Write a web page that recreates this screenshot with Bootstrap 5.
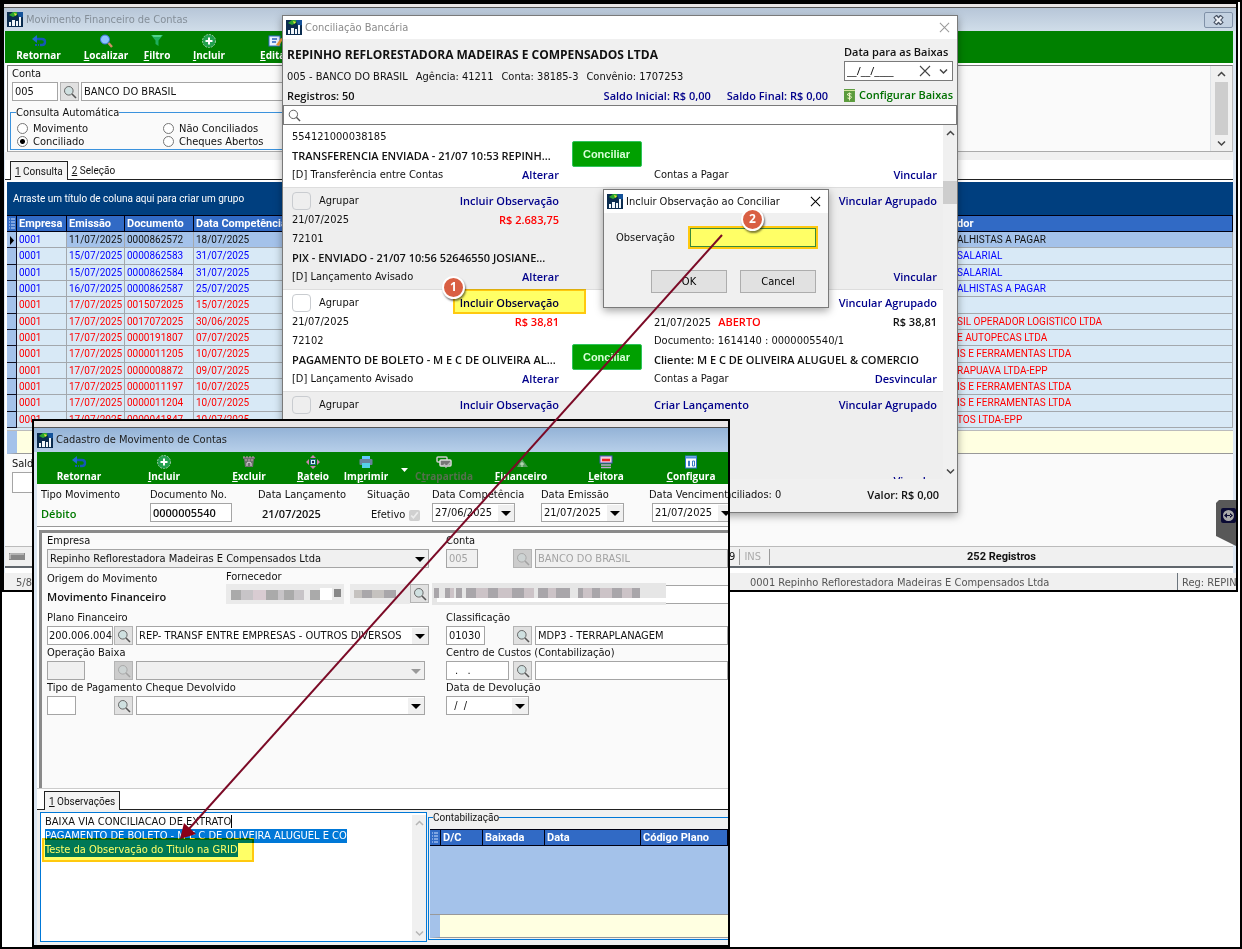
<!DOCTYPE html>
<html lang="pt-BR">
<head>
<meta charset="utf-8">
<meta name="viewport" content="width=device-width, initial-scale=1">
<title>Movimento Financeiro de Contas</title>
<link href="https://cdn.jsdelivr.net/npm/bootstrap@5.3.0/dist/css/bootstrap.min.css" rel="stylesheet">
<style>
  :root { --ui: "DejaVu Sans Condensed", "Open Sans", sans-serif; --strong: "Open Sans", "Noto Sans", sans-serif; --sys: Roboto, "Liberation Sans", sans-serif; }
  body { font: 11px/16px var(--ui); color: #111; background: #fff; }
  .desk { border: 2px solid #000; min-height: 100vh; overflow: hidden; }
  .shot { border: 2px solid #000; background: #dce7f3; overflow: hidden; }
  .shot-main { margin-right: 2px; }
  .shot-body { padding: 0 3px 0 1px; }
  .sys { font-family: var(--sys); font-size: 10px; }
  .fw-semi { font-family: var(--strong) !important; font-weight: 600 !important; }
  .heading { font: 700 12px/24px var(--strong); }
  .red { color: #f00; }
  .edge { height: 4px; background: #e9e6e6; border-bottom: 1px solid #555; }
  .titlebar { height: 23px; background: linear-gradient(#b7c6d8, #d0dde9); color: #858f99; padding: 0 3px; }
  .appicon { width: 16px; height: 15px; flex: none; margin-right: 3px; }
  .winclose { width: 29px; height: 16px; border: 1px solid #8091a8; border-radius: 2px; background: #c3d1e1; line-height: 1; }

  /* green command bars */
  .cmdbar { height: 32px; background: #008000; display: grid; overflow: hidden; }
  .cmdbar button { border: 0; background: none; color: #fff; font: 700 10px/14px var(--strong); padding: 3px 0 0; white-space: nowrap; display: flex; flex-direction: column; align-items: center; overflow: visible; }
  .cmdbar svg { width: 16px; height: 14px; display: block; }
  .cmdbar button:disabled { color: #55704d; }
  .bar-main { grid-template-columns: 67px 68px 34px 70px 62px; }
  .bar-cad { grid-template-columns: 84px 86px 84px 44px 62px 13px 68px 86px 84px 86px; }

  /* fields */
  .fld { height: 19px; border: 1px solid #a5a5a5; border-radius: 0; background-color: #fff; font: 11px/16px var(--ui); color: #111; padding: 0 2px; min-width: 0; }
  .fld:disabled { background-color: #f0f0f0; color: #a3a3a3; opacity: 1; }
  select.fld { appearance: none; background-repeat: no-repeat; background-position: right center; background-image: url("data:image/svg+xml,%3Csvg xmlns='http://www.w3.org/2000/svg' width='16' height='16'%3E%3Crect width='16' height='16' fill='%23f0f0f0'/%3E%3Cpath d='M3 6h10l-5 5z' fill='%23000'/%3E%3C/svg%3E"); }
  .fld.grey { background-color: #f0f0f0; }
  select.fld:disabled { background-image: url("data:image/svg+xml,%3Csvg xmlns='http://www.w3.org/2000/svg' width='16' height='16'%3E%3Cpath d='M3 6h10l-5 5z' fill='%23999'/%3E%3C/svg%3E"); }
  .lupa { width: 19px; height: 19px; flex: none; border: 1px solid #b4b4b4; background: #e1e1e1; padding: 0; display: flex; align-items: center; justify-content: center; }
  .lupa svg { width: 14px; height: 14px; }
  .lupa:disabled { background: #ccc; }
  .lupa:disabled svg { opacity: .35; }

  .filterbox { height: 87px; margin-left: 2px; margin-top: 2px; background: #fafafa; border: 1px solid #777; border-right-color: #bbb; border-bottom-color: #aaa; }
  .contarow { display: grid; grid-template-columns: 46px 19px 1fr; column-gap: 2px; width: 60%; }
  .autobox { border: 1px solid #3a92dd; height: 38px; width: 60%; margin: 11px 0 0 2px; padding: 9px 0 0 6px; position: relative; }
  .autobox legend { position: absolute; top: -8px; left: 5px; width: auto; background: #fafafa; font: 11px/16px var(--ui); margin: 0; }
  .autobox label { display: flex; align-items: center; width: 146px; height: 13px; gap: 5px; white-space: nowrap; }
  .autobox input { appearance: none; width: 11px; height: 11px; margin: 0; border: 1px solid #777; border-radius: 50%; background: #fff; }
  .autobox input:checked { background: radial-gradient(#000 0 2px, #fff 3px); }
  .sbar { background: #f0f0f0; display: flex; flex-direction: column; align-items: center; justify-content: space-between; color: #444; }
  .sbar svg { width: 9px; height: 16px; }

  .tabstrip { background: #fff; height: 20px; border-bottom: 1px solid #222; padding-left: 5px; align-items: flex-end; }
  .tabstrip button { border: 0; background: none; font: 10px/15px var(--sys); padding: 0 4px; height: 18px; color: #111; }
  .tabstrip .on { border: 1px solid #222; border-bottom: 0; background: #f3f3f3; margin-bottom: -1px; height: 19px; }
  .groupband { background: #003f7f; color: #fff; height: 33px; line-height: 33px; padding-left: 6px; }
  .dbgrid { width: 100%; table-layout: fixed; border-collapse: separate; border-spacing: 0; font: 10px/13px var(--sys); }
  .dbgrid th { background: #316ac5; color: #fff; font-size: 11px; height: 17px; line-height: 14px; padding: 0 2px; border: solid #001; border-width: 1px 1px 1px 0; white-space: nowrap; overflow: hidden; }
  .dbgrid td { background: #d8e9f6; border: solid #a3a8ad; border-width: 0 1px 1px 0; padding: 0 2px; white-space: nowrap; overflow: hidden; color: #f00; }
  .dbgrid td:first-child { background: #a4c2ea; border-color: #112; color: #000; padding: 0; line-height: 1; }
  .dbgrid tr.blue td { color: #00f; }
  .dbgrid tr.cur td { background: #a4c2ea; color: #111; }
  .dbgrid tr.cur td:nth-child(2) { background: #d8e9f6; color: #00f; }
  .dbgrid tbody tr { height: 16px; }
  .movs { height: 213px; }
  .movs th:last-child, .movs td:last-child { padding-left: 0; }
  .dbgrid th.skip, .dbgrid td.skip { border-right: 0; }
  .sumrow { height: 23px; background: #ffffe1; border-left: 10px solid #a4c2ea; border-bottom: 1px solid #999; }
  .statusrow { height: 22px; background: #f0f0f0; border-top: 1px solid #bbb; border-bottom: 2px solid #60666c; }
  .statusrow > div { border-left: 1px solid #999; }
  .appstatus { height: 17px; line-height: 20px; background: #f0f0f0; color: #555; overflow: hidden; }

  /* floating windows */
  .win { position: absolute; border: 1px solid #7a7a7a; background: #f0f0f0; box-shadow: 0 3px 8px rgba(0,0,0,.35); }
  .win-title { background: #fff; height: 23px; padding: 0 3px; }
  .win-title button { border: 0; background: none; padding: 0; line-height: 0; }
  .w-conc { left: 280px; top: 13px; width: 676px; height: 498px; }
  .w-obs { left: 601px; top: 187px; width: 226px; height: 119px; }
  .w-cad { position: absolute; left: 30px; top: 417px; width: 698px; }
  .navy { color: #00008b; }
  .win a { text-decoration: none; font-family: var(--strong); font-weight: 600; color: #00008b; }
  .win a.green { color: #007000; height: 20px; margin-top: 4px; }
  .extrato { height: 354px; overflow: hidden; background: #eee; }
  .lanc { display: grid; grid-template-columns: 267fr 95fr 283fr; padding: 3px 6px 3px 9px; border-bottom: 1px solid #ddd; line-height: 19px; white-space: nowrap; }
  .lanc:nth-child(odd) { background: #fff; }
  .lanc.first { padding-top: 2px; }
  .lanc .ln { display: flex; justify-content: space-between; height: 19px; }
  .lanc input { appearance: none; width: 19px; height: 18px; border: 1px solid #c9ccd0; border-radius: 4px; margin: 0 8px 0 0; }
  .btn-conc { width: 70px; height: 26px; border: 1px solid #2fc35c; border-radius: 2px; background: #00a000; color: #d8ffd8; font: 700 11px/20px "Liberation Sans", sans-serif; padding: 0; }
  .dlg-btn { width: 76px; height: 23px; background: #e1e1e1; border: 1px solid #adadad; font: 11px/18px var(--ui); padding: 0; }

  .field-head { display: grid; grid-template-columns: 109px 108px 109px 65px 109px 108px 100px; height: 43px; padding: 3px 0 0 4px; background: #fafafa; border-bottom: 1px solid #999; white-space: nowrap; }
  .field-head label, .cap { display: block; height: 16px; line-height: 16px; white-space: nowrap; }
  .field-head b { line-height: 22px; }
  .formbox { height: 258px; margin: 3px 0 0 2px; border: solid #8a8a8a; border-width: 3px 0 0 3px; background: #fafafa; padding-left: 5px; overflow: hidden; }
  .frow { display: grid; grid-template-columns: 382px 1fr; column-gap: 17px; height: 35px; }
  .trio { display: grid; grid-template-columns: 67px 19px 1fr; }
  .trio > :last-child { margin-left: 3px; }
  .trio .code { padding: 0 0 0 1px; width: 66px; }
  .memo { width: 387px; height: 130px; border: 1px solid #0078d7; background: #fff; line-height: 14px; padding: 2px 0 0 4px; white-space: nowrap; outline: 0; }
  .memo .sel { background: #0078d7; color: #fff; display: inline-block; height: 14px; }
  .contab { border: 1px solid #0078d7; border-right: 0; margin: 5px 0 2px 1px; position: relative; }
  .contab legend { position: absolute; top: -8px; left: 4px; width: auto; background: #f0f0f0; font: 10px/16px var(--sys); margin: 0; }

  /* annotations drawn over the windows */
  .note { position: absolute; background: #ffff66; border: 2px solid #ffc90e; mix-blend-mode: multiply; pointer-events: none; }
  .pin { position: absolute; width: 23px; height: 23px; border: 2px solid #fff; border-radius: 50%; background: #d95f43; color: #fff; font: 700 12px/18px var(--strong); text-align: center; box-shadow: 1px 2px 2px rgba(0,0,0,.5); }
  .arrow { position: absolute; left: -2px; top: -2px; pointer-events: none; }
  .tview { position: absolute; right: 4px; top: 498px; width: 20px; height: 46px; }
</style>
</head>
<body>
<svg width="0" height="0" class="position-absolute" aria-hidden="true">
  <symbol id="app" viewBox="0 0 16 15"><rect width="16" height="15" fill="#0b2c4f"/><path d="M2 3l4-3h5l-1 3-4 2z" fill="#2ba52e"/><path d="M7 1l3 1-2 2z" fill="#e9e13a"/><path d="M10 0h6v5l-4 1z" fill="#15539a"/><path d="M2 10h2v4H2zM5 8h3v6H5zM9 9h2v5H9zM12 5h2v9h-2z" fill="#f1f6fa"/></symbol>
  <symbol id="lupa" viewBox="0 0 14 14"><circle cx="5.8" cy="5.8" r="4.3" fill="#cfe0e0" stroke="#666"/><path d="M9 9l4 4" stroke="#555" stroke-width="1.6"/></symbol>
  <symbol id="back" viewBox="0 0 16 14"><path d="M3 5h8q3 0 3 3t-3 3H9" fill="none" stroke="#1457b5" stroke-width="2.4"/><path d="M6 1L1 5l5 4z" fill="#1f6cd0"/><path d="M4 11h2M7 11h1" stroke="#1457b5" stroke-width="2"/></symbol>
  <symbol id="find" viewBox="0 0 16 14"><circle cx="7" cy="5.5" r="4.5" fill="#8cc3ff" stroke="#3f70dd"/><path d="M10.5 9l3.5 4" stroke="#d08f66" stroke-width="2.4"/></symbol>
  <symbol id="funnel" viewBox="0 0 16 14"><path d="M2 1h12L9.500 6.500V12l-3-2V6.500z" fill="#1fae5d"/><path d="M3 1h10l-1.500 2h-7z" fill="#53d58b"/></symbol>
  <symbol id="plus" viewBox="0 0 16 14"><circle cx="8" cy="7" r="6.5" fill="#22a04e" stroke="#9ac9a4" stroke-dasharray="2 1"/><path d="M8 3.500v7M4.500 7h7" stroke="#fff" stroke-width="2"/></symbol>
  <symbol id="edit" viewBox="0 0 16 14"><rect x="2" y="2" width="11" height="10" fill="#eaf2ff" stroke="#316ac5"/><path d="M5 5h5M5 8h4" stroke="#2b62bd" stroke-width="1.5"/><path d="M9 11l5-7 2 1-4 7z" fill="#f59a37"/></symbol>
  <symbol id="trash" viewBox="0 0 16 14"><path d="M2 2h12v2H2zM3 4h10l-1 8H4z" fill="#6f6f6f"/><path d="M2 2h12M4 5l8 0" stroke="#c9a9b4" stroke-dasharray="2 1"/><path d="M6 11V8q2-2 4 0v3" fill="none" stroke="#ddd"/></symbol>
  <symbol id="rateio" viewBox="0 0 16 14"><path d="M8 0l3 3H5zM8 14l3-3H5zM1 7l3-3v6zM15 7l-3-3v6z" fill="#c985ae"/><rect x="5.5" y="4.5" width="5" height="5" fill="#dff" stroke="#268"/><circle cx="8" cy="7" r="1.2" fill="#124"/></symbol>
  <symbol id="print" viewBox="0 0 16 14"><path d="M4 1h8v4H4z" fill="#62c8ff"/><rect x="1.5" y="4" width="13" height="6" rx="1" fill="#68829d"/><path d="M4 8h8v5H4z" fill="#55d0e8"/></symbol>
  <symbol id="cards" viewBox="0 0 16 14"><rect x="1" y="2" width="10" height="5" rx="1" fill="none" stroke="#ccc" stroke-width="1.5"/><rect x="4" y="5" width="11" height="6" rx="1" fill="#777" stroke="#ddd" stroke-width="1.5"/><path d="M8 9l2 3 5-5" fill="none" stroke="#bbb" stroke-width="1.5"/></symbol>
  <symbol id="fin" viewBox="0 0 16 14"><path d="M9 4l6 8H4z" fill="#5a9d62"/><path d="M9 7v5M7 9h4" stroke="#cde8c9"/></symbol>
  <symbol id="leitor" viewBox="0 0 16 14"><rect x="2" y="1" width="12" height="7" fill="#eecddb" stroke="#4c55c8"/><path d="M4 5h8" stroke="#e22" stroke-width="2.5"/><path d="M3 10h10M3 12.500h10" stroke="#bda8ce" stroke-width="1.5"/></symbol>
  <symbol id="config" viewBox="0 0 16 14"><rect x="2.5" y="1" width="11" height="12" fill="#fff" stroke="#2f74c8"/><path d="M2.500 2.500h11" stroke="#4e91df" stroke-width="2"/><path d="M5.500 6h1v5h-1zM9.500 6h2v5h-2z" fill="none" stroke="#3a78c4"/></symbol>
  <symbol id="up" viewBox="0 0 9 16"><path d="M1 10L4.500 6.500 8 10" fill="none" stroke="currentColor" stroke-width="1.5"/></symbol>
  <symbol id="down" viewBox="0 0 9 16"><path d="M1 6.500L4.500 10 8 6.500" fill="none" stroke="currentColor" stroke-width="1.5"/></symbol>
  <symbol id="x" viewBox="0 0 12 12"><path d="M1 1l10 10M11 1L1 11" stroke="currentColor" stroke-width="1.1"/></symbol>
</svg>

<div class="desk position-relative">

  <!-- main window -->
  <main class="shot shot-main">
    <div class="edge"></div>
    <div class="titlebar d-flex align-items-center">
      <svg class="appicon"><use href="#app"/></svg><span>Movimento Financeiro de Contas</span>
      <button class="winclose ms-auto p-0" aria-label="Fechar"><svg width="11" height="10" viewBox="0 0 11 10"><path d="M2 1l7 8M9 1L2 9" stroke="#454f60" stroke-width="4.5"/><path d="M2.500 2l6 6M8.500 2l-6 6" stroke="#eef2f8" stroke-width="2.2"/></svg></button>
    </div>
    <div class="shot-body">
      <nav class="cmdbar bar-main">
        <button><svg><use href="#back"/></svg>Retornar</button>
        <button><svg><use href="#find"/></svg><span><u>L</u>ocalizar</span></button>
        <button><svg><use href="#funnel"/></svg><span><u>F</u>iltro</span></button>
        <button><svg><use href="#plus"/></svg><span><u>I</u>ncluir</span></button>
        <button><svg><use href="#edit"/></svg><span><u>E</u>ditar</span></button>
      </nav>
      <div class="bg-white overflow-hidden">
        <section class="filterbox d-flex">
          <div class="flex-grow-1">
            <label class="d-block ms-1" for="conta">Conta</label>
            <div class="contarow ms-1">
              <input class="fld" id="conta" value="005">
              <button class="lupa" aria-label="Pesquisar conta"><svg><use href="#lupa"/></svg></button>
              <input class="fld" value="BANCO DO BRASIL" aria-label="Nome da conta">
            </div>
            <fieldset class="autobox">
              <legend>Consulta Automática</legend>
              <div class="d-flex"><label><input type="radio" name="ca">Movimento</label><label><input type="radio" name="ca">Não Conciliados</label></div>
              <div class="d-flex"><label><input type="radio" name="ca" checked>Conciliado</label><label><input type="radio" name="ca">Cheques Abertos</label></div>
            </fieldset>
          </div>
          <div class="sbar border-start px-1" aria-hidden="true"><svg><use href="#up"/></svg><span class="flex-grow-1" style="width:13px;background:#cdcdcd"></span><svg><use href="#down"/></svg></div>
        </section>
        <div style="height:8px;background:#f0f0f0"></div>
        <div class="tabstrip d-flex"><button class="on"><u>1</u> Consulta</button><button><u>2</u> Seleção</button></div>
        <div style="margin:2px 0 0 2px">
          <div class="groupband sys">Arraste um título de coluna aqui para criar um grupo</div>
          <table class="dbgrid movs">
            <colgroup><col style="width:10px"><col style="width:50px"><col style="width:58px"><col style="width:69px"><col><col style="width:276px"></colgroup>
            <thead><tr><th class="p-0"><svg class="d-block" width="9" height="11" viewBox="0 0 9 11"><path d="M2 1h1M2 4h1M2 7h1M2 10h1M4 1h4M4 4h4M4 7h4M4 10h4" stroke="#cfe0ff"/></svg></th><th>Empresa</th><th>Emissão</th><th>Documento</th><th class="skip">Data Competência</th><th>dor</th></tr></thead>
            <tbody>
              <tr class="cur"><td><svg width="8" height="9" viewBox="0 0 8 9"><path d="M3 0l4 4.500L3 9z"/></svg></td><td>0001</td><td>11/07/2025</td><td>0000862572</td><td class="skip">18/07/2025</td><td>ALHISTAS A PAGAR</td></tr>
              <tr class="blue"><td></td><td>0001</td><td>15/07/2025</td><td>0000862583</td><td class="skip">31/07/2025</td><td>SALARIAL</td></tr>
              <tr class="blue"><td></td><td>0001</td><td>15/07/2025</td><td>0000862584</td><td class="skip">31/07/2025</td><td>SALARIAL</td></tr>
              <tr class="blue"><td></td><td>0001</td><td>16/07/2025</td><td>0000862587</td><td class="skip">25/07/2025</td><td>ALHISTAS A PAGAR</td></tr>
              <tr><td></td><td>0001</td><td>17/07/2025</td><td>0015072025</td><td class="skip">15/07/2025</td><td></td></tr>
              <tr><td></td><td>0001</td><td>17/07/2025</td><td>0017072025</td><td class="skip">30/06/2025</td><td>SIL OPERADOR LOGISTICO LTDA</td></tr>
              <tr><td></td><td>0001</td><td>17/07/2025</td><td>0000191807</td><td class="skip">07/07/2025</td><td>E AUTOPECAS LTDA</td></tr>
              <tr><td></td><td>0001</td><td>17/07/2025</td><td>0000011205</td><td class="skip">10/07/2025</td><td>IS E FERRAMENTAS LTDA</td></tr>
              <tr><td></td><td>0001</td><td>17/07/2025</td><td>0000008872</td><td class="skip">09/07/2025</td><td>RAPUAVA LTDA-EPP</td></tr>
              <tr><td></td><td>0001</td><td>17/07/2025</td><td>0000011197</td><td class="skip">10/07/2025</td><td>IS E FERRAMENTAS LTDA</td></tr>
              <tr><td></td><td>0001</td><td>17/07/2025</td><td>0000011204</td><td class="skip">10/07/2025</td><td>IS E FERRAMENTAS LTDA</td></tr>
              <tr><td></td><td>0001</td><td>17/07/2025</td><td>0000041847</td><td class="skip">10/07/2025</td><td>TOS LTDA-EPP</td></tr>
            </tbody>
          </table>
          <div style="height:3px;background:#d8e9f6;border-bottom:1px solid #bbb"></div>
          <div class="sumrow"></div>
        </div>
        <section style="background:#fafafa;height:92px;padding:2px 0 0 7px">
          <label class="d-block" for="saldo">Saldo</label>
          <input class="fld" id="saldo" style="width:90px;height:21px">
        </section>
        <div class="statusrow d-flex align-items-center">
          <svg class="ms-1" width="16" height="8"><rect width="16" height="7" fill="#888"/><path d="M1 6V1h14" stroke="#ddd" fill="none"/></svg>
          <div class="ms-auto border-0 pe-1">5.9</div><div class="px-1 me-1" style="color:#aaa">INS</div>
          <div class="text-center fw-bold" style="width:464px;font-family:var(--sys)">252 Registros</div>
        </div>
        <div style="height:5px;background:#fff"></div>
      </div>
    </div>
    <footer class="appstatus d-flex"><span class="ps-2 ms-1">5/8</span><span class="ms-auto" style="width:427px">0001 Repinho Reflorestadora Madeiras E Compensados Ltda</span><span class="ps-1 border-start border-secondary text-nowrap overflow-hidden" style="width:59px">Reg: REPINHO</span></footer>
  </main>
  <svg class="tview" viewBox="0 0 20 46" aria-hidden="true"><path d="M3 0h17v46L0 36V3z" fill="#585858"/><rect x="5" y="8" width="15" height="15" rx="2" fill="#0b0b34"/><circle cx="12.5" cy="15.5" r="5.5" fill="#aaa"/><path d="M8 15.500l3-2.500v5zM17 15.500L14 13v5zM10 15h5v1h-5z" fill="#0b0b34"/></svg>

  <!-- bank reconciliation -->
  <section class="win w-conc">
    <div class="win-title d-flex align-items-center" style="color:#8a8a8a"><svg class="appicon"><use href="#app"/></svg>Conciliação Bancária
      <button class="ms-auto me-1" aria-label="Fechar" style="color:#999"><svg width="11" height="11"><use href="#x"/></svg></button></div>
    <div class="d-flex" style="height:66px;padding:4px 4px 0 4px">
      <div class="flex-grow-1">
        <div class="heading">REPINHO REFLORESTADORA MADEIRAS E COMPENSADOS LTDA</div>
        <div style="line-height:20px"><span class="me-2">005 - BANCO DO BRASIL</span><span class="me-2">Agência: 41211</span><span class="me-2">Conta: 38185-3</span>Convênio: 1707253</div>
        <div class="d-flex fw-semi" style="line-height:18px"><span>Registros: 50</span><span class="navy ms-auto me-3">Saldo Inicial: R$ 0,00</span><span class="navy me-3">Saldo Final: R$ 0,00</span></div>
      </div>
      <div style="width:109px">
        <label class="fw-semi d-block text-nowrap" for="dtb" style="line-height:18px">Data para as Baixas</label>
        <div class="d-flex align-items-center bg-white pe-1" style="border:1px solid #7a7a7a;height:20px;color:#444">
          <input id="dtb" class="border-0 p-0 w-50" value="__/__/____" style="font:11px/16px var(--strong);margin-left:2px">
          <svg class="ms-auto me-2" width="12" height="12"><use href="#x"/></svg><svg width="9" height="16"><use href="#down"/></svg>
        </div>
        <a href="#" class="green d-flex align-items-center text-nowrap"><svg class="me-1" width="11" height="13" viewBox="0 0 11 13"><rect width="11" height="13" fill="#5b9b3c"/><path d="M0 1.500h11" stroke="#d7e8a0"/><path d="M7.500 5Q3 3.500 3.500 6q4 .5 4 2.500-1 2-4 .5M5.500 3.500v8" stroke="#eff5c8" fill="none"/></svg>Configurar Baixas</a>
      </div>
    </div>
    <div class="d-flex align-items-center bg-white" style="height:20px;border:1px solid #7a7a7a"><svg class="mx-1" width="13" height="13" viewBox="0 0 14 14"><circle cx="5.8" cy="5.8" r="4.5" fill="none" stroke="#555"/><path d="M9 9l4 4" stroke="#555" stroke-width="1.5"/></svg><input class="border-0 p-0 flex-grow-1" aria-label="Pesquisar" style="height:16px"></div>
    <div class="d-flex">
      <div class="extrato flex-grow-1">
        <article class="lanc first">
          <div><div class="ln">554121000038185</div><div class="ln fw-semi">TRANSFERENCIA ENVIADA - 21/07 10:53 REPINH...</div><div class="ln"><span>[D] Transferência entre Contas</span><a href="#">Alterar</a></div></div>
          <div class="text-center"><button class="btn-conc" style="margin-top:14px">Conciliar</button></div>
          <div><div class="ln"></div><div class="ln"></div><div class="ln"><span>Contas a Pagar</span><a href="#">Vincular</a></div></div>
        </article>
        <article class="lanc">
          <div><div class="ln"><label class="d-flex align-items-center"><input type="checkbox">Agrupar</label><a href="#">Incluir Observação</a></div><div class="ln"><span>21/07/2025</span><b class="fw-semi red">R$ 2.683,75</b></div><div class="ln">72101</div><div class="ln fw-semi">PIX - ENVIADO - 21/07 10:56 52646550 JOSIANE...</div><div class="ln"><span>[D] Lançamento Avisado</span><a href="#">Alterar</a></div></div>
          <div></div>
          <div><div class="ln"><span></span><a href="#">Vincular Agrupado</a></div><div class="ln"></div><div class="ln"></div><div class="ln"></div><div class="ln"><span></span><a href="#">Vincular</a></div></div>
        </article>
        <article class="lanc">
          <div><div class="ln"><label class="d-flex align-items-center"><input type="checkbox">Agrupar</label><a href="#">Incluir Observação</a></div><div class="ln"><span>21/07/2025</span><b class="fw-semi red">R$ 38,81</b></div><div class="ln">72102</div><div class="ln fw-semi">PAGAMENTO DE BOLETO - M E C DE OLIVEIRA AL...</div><div class="ln"><span>[D] Lançamento Avisado</span><a href="#">Alterar</a></div></div>
          <div class="text-center"><button class="btn-conc" style="margin-top:51px">Conciliar</button></div>
          <div><div class="ln"><span></span><a href="#">Vincular Agrupado</a></div><div class="ln"><span>21/07/2025 <b class="fw-semi red ms-1">ABERTO</b></span><b class="fw-semi">R$ 38,81</b></div><div class="ln">Documento: 1614140 : 0000005540/1</div><div class="ln fw-semi">Cliente: M E C DE OLIVEIRA ALUGUEL &amp; COMERCIO</div><div class="ln"><span>Contas a Pagar</span><a href="#">Desvincular</a></div></div>
        </article>
        <article class="lanc">
          <div><div class="ln"><label class="d-flex align-items-center"><input type="checkbox">Agrupar</label><a href="#">Incluir Observação</a></div><div class="ln fw-semi"><span>21/07/2025</span><b class="fw-semi red">R$ 53,25</b></div></div>
          <div></div>
          <div><div class="ln"><a href="#">Criar Lançamento</a><a href="#">Vincular Agrupado</a></div><div class="ln">Não Localizado</div><div class="ln"></div><div class="ln"></div><div class="ln"><span></span><a href="#">Vincular</a></div></div>
        </article>
      </div>
      <div class="sbar flex-shrink-0" style="width:14px"><svg><use href="#up"/></svg><span style="width:14px;height:23px;background:#cdcdcd;margin-bottom:220px"></span><svg><use href="#down"/></svg></div>
    </div>
    <div class="d-flex justify-content-end" style="line-height:32px;padding-right:18px"><span style="margin-right:86px">Não Conciliados: 0</span><span class="fw-semi">Valor: R$ 0,00</span></div>
  </section>

  <!-- transaction record -->
  <section class="shot w-cad">
    <div class="edge" style="height:7px"></div>
    <div class="titlebar d-flex align-items-center" style="height:24px;background:linear-gradient(#94b3d7,#b7cfe9);color:#222"><svg class="appicon"><use href="#app"/></svg>Cadastro de Movimento de Contas</div>
    <div style="margin-left:3px">
      <nav class="cmdbar bar-cad">
        <button><svg><use href="#back"/></svg>Retornar</button>
        <button><svg><use href="#plus"/></svg><span><u>I</u>ncluir</span></button>
        <button><svg><use href="#trash"/></svg><span><u>E</u>xcluir</span></button>
        <button><svg><use href="#rateio"/></svg><span><u>R</u>ateio</span></button>
        <button><svg><use href="#print"/></svg><span>Im<u>p</u>rimir</span></button>
        <button aria-label="Opções de impressão"><svg viewBox="0 0 16 14" class="mt-2"><path d="M5 5h7l-3.500 4z" fill="#fff"/></svg></button>
        <button disabled><svg><use href="#cards"/></svg><span>C<u>t</u>rapartida</span></button>
        <button><svg><use href="#fin"/></svg><span><u>F</u>inanceiro</span></button>
        <button><svg><use href="#leitor"/></svg><span><u>L</u>eitora</span></button>
        <button><svg><use href="#config"/></svg><span><u>C</u>onfigura</span></button>
      </nav>
      <div class="field-head">
        <div><span class="cap">Tipo Movimento</span><b class="fw-semi" style="color:#007a00">Débito</b></div>
        <div><label for="doc">Documento No.</label><input id="doc" class="fld fw-semi" value="0000005540" style="width:82px"></div>
        <div><span class="cap">Data Lançamento</span><b class="fw-semi ms-1">21/07/2025</b></div>
        <div><span class="cap">Situação</span><label class="d-flex align-items-center ms-1 mt-1">Efetivo<input type="checkbox" checked disabled class="m-0 ms-1" style="width:11px;height:11px"></label></div>
        <div><label for="dc">Data Competência</label><select id="dc" class="fld" style="width:83px"><option>27/06/2025</option></select></div>
        <div><label for="de">Data Emissão</label><select id="de" class="fld" style="width:83px"><option>21/07/2025</option></select></div>
        <div><label for="dv">Data Vencimento</label><select id="dv" class="fld" style="width:83px;margin-left:3px"><option>21/07/2025</option></select></div>
      </div>
      <div class="bg-white overflow-hidden">
      <div class="formbox">
        <div class="frow">
          <div><label class="cap" for="emp">Empresa</label><select id="emp" class="fld grey w-100"><option>Repinho Reflorestadora Madeiras E Compensados Ltda</option></select></div>
          <div><label class="cap" for="cta">Conta</label><div class="trio"><input id="cta" class="fld" value="005" disabled style="width:32px"><button class="lupa" disabled aria-label="Pesquisar"><svg><use href="#lupa"/></svg></button><input class="fld" value="BANCO DO BRASIL" disabled aria-label="Nome da conta"></div></div>
        </div>
        <div class="frow" style="margin:3px 0 4px">
          <div class="d-flex">
            <div style="width:181px"><span class="cap">Origem do Movimento</span><b class="fw-semi text-nowrap" style="line-height:20px">Movimento Financeiro</b></div>
            <div class="flex-grow-1"><span class="cap" style="height:13px;line-height:12px;overflow:hidden">Fornecedor</span>
              <div class="d-flex"><svg class="me-auto" width="184" height="20" aria-hidden="true"><path d="M0 0h118v20H0zM124 0h60v20h-60z" fill="#eaeaea"/><path d="M5 6h10v10H5zM40 6h12v10H40zM58 6h10v10H58zM84 6h10v10H84z" fill="#aaa"/><path d="M15 6h12v10H15zM52 6h6v10h-6zM68 6h10v10H68z" fill="#c7c4c7"/><path d="M27 6h13v10H27z" fill="#d9ccd2"/><path d="M108 5h7v8h-7z" fill="#888"/><path d="M94 4h12v12H94z" fill="#fff"/><path d="M128 6h8v8h-8zM146 6h12v8h-12z" fill="#c5c2bf"/><path d="M136 6h10v8h-10zM158 6h12v8h-12z" fill="#a9a7aa"/></svg><button class="lupa" aria-label="Pesquisar fornecedor"><svg><use href="#lupa"/></svg></button></div>
            </div>
          </div>
          <div style="margin:12px 0 0 -14px;height:22px"><svg class="d-block" width="300" height="22" aria-hidden="true"><path d="M0 2.500h300v18H0z" fill="#fff" stroke="#a5a5a5"/><path d="M0 0h234v22H0z" fill="#e6e6e6"/><path d="M5 15h229v4H5z" fill="#fff"/><path d="M2 5h5v10H2zM13 5h5v10h-5zM24 5h6v10h-6zM34 5h10v10H34zM56 5h10v10H56zM80 5h12v10H80zM106 5h10v10h-10zM124 5h14v10h-14zM146 5h5v10h-5zM160 5h8v10h-8zM180 5h10v10h-10zM200 5h8v10h-8z" fill="#a9a6aa"/><path d="M18 5h4v10h-4zM44 5h12v10H44zM66 5h14v10H66zM92 5h10v10H92zM116 5h8v10h-8zM151 5h9v10h-9zM168 5h12v10h-12zM190 5h10v10h-10z" fill="#ccc3c7"/></svg></div>
        </div>
        <div class="frow">
          <div><label class="cap" for="pf">Plano Financeiro</label><div class="trio"><input id="pf" class="fld code" value="200.006.004"><button class="lupa" aria-label="Pesquisar"><svg><use href="#lupa"/></svg></button><select class="fld" aria-label="Plano"><option>REP- TRANSF ENTRE EMPRESAS - OUTROS DIVERSOS</option></select></div></div>
          <div><label class="cap" for="cl">Classificação</label><div class="trio"><input id="cl" class="fld" value="01030" style="width:39px"><button class="lupa" aria-label="Pesquisar"><svg><use href="#lupa"/></svg></button><input class="fld" value="MDP3 - TERRAPLANAGEM" aria-label="Nome da classificação"></div></div>
        </div>
        <div class="frow">
          <div><label class="cap" for="ob">Operação Baixa</label><div class="trio pe-1"><input id="ob" class="fld" disabled style="width:38px"><button class="lupa" disabled aria-label="Pesquisar"><svg><use href="#lupa"/></svg></button><select class="fld" disabled aria-label="Operação"></select></div></div>
          <div><label class="cap" for="cc">Centro de Custos (Contabilização)</label><div class="trio"><input id="cc" class="fld ps-2" value=".   ." style="width:63px"><button class="lupa" aria-label="Pesquisar"><svg><use href="#lupa"/></svg></button><input class="fld" aria-label="Nome do centro de custos"></div></div>
        </div>
        <div class="frow">
          <div><label class="cap" for="tp">Tipo de Pagamento Cheque Devolvido</label><div class="trio pe-1"><input id="tp" class="fld" style="width:29px"><button class="lupa" aria-label="Pesquisar"><svg><use href="#lupa"/></svg></button><select class="fld" aria-label="Tipo de pagamento"></select></div></div>
          <div><label class="cap" for="dd">Data de Devolução</label><select id="dd" class="fld ps-1" style="width:83px"><option>&nbsp;/ &nbsp;/</option></select></div>
        </div>
      </div>
      <div class="tabstrip d-flex" style="height:22px;border-top:1px solid #ccc;padding-left:7px"><button class="on"><u>1</u> Observações</button></div>
      <div class="d-flex" style="background:#f0f0f0;padding:2px 0 3px 3px">
        <div class="memo flex-shrink-0 d-flex" role="textbox" aria-multiline="true" aria-label="Observações" contenteditable="true" tabindex="0"><div class="flex-grow-1"><span style="border-right:1px solid #000">BAIXA VIA CONCILIACAO DE EXTRATO</span><br><span class="sel">PAGAMENTO DE BOLETO - M E C DE OLIVEIRA ALUGUEL E CO</span><br><span class="sel">Teste da Observação do Titulo na GRID</span></div><div class="sbar" style="width:14px;color:#b5b5b5"><svg><use href="#up"/></svg><svg><use href="#down"/></svg></div></div>
        <fieldset class="contab flex-grow-1">
          <legend>Contabilização</legend>
          <div class="d-flex flex-column h-100" style="padding:11px 0 1px 1px">
            <table class="dbgrid"><colgroup><col style="width:11px"><col style="width:42px"><col style="width:62px"><col style="width:96px"><col></colgroup><thead><tr><th class="p-0"><svg class="d-block" width="9" height="11" viewBox="0 0 9 11"><path d="M2 1h1M2 4h1M2 7h1M2 10h1M4 1h4M4 4h4M4 7h4M4 10h4" stroke="#cfe0ff"/></svg></th><th>D/C</th><th>Baixada</th><th>Data</th><th>Código Plano</th></tr></thead></table>
            <div class="flex-grow-1" style="background:#a4c2ea;border-bottom:1px solid #999"></div>
            <div class="sumrow"></div>
          </div>
        </fieldset>
      </div>
      </div>
    </div>
  </section>

  <!-- note prompt -->
  <form class="win w-obs">
    <div class="win-title d-flex align-items-center"><svg class="appicon"><use href="#app"/></svg>Incluir Observação ao Conciliar<button type="button" class="ms-auto me-1" aria-label="Fechar"><svg width="11" height="11"><use href="#x"/></svg></button></div>
    <div class="d-flex align-items-center justify-content-between" style="padding:13px 10px 0 12px"><label for="obs">Observação</label><input id="obs" style="width:130px;height:23px;background:#ffff66;border:2px solid #ffc90e;outline:1px solid #3a8a3a;outline-offset:-3px"></div>
    <div class="d-flex justify-content-end" style="gap:13px;padding:21px 12px 0 0"><button type="button" class="dlg-btn">OK</button><button type="button" class="dlg-btn">Cancel</button></div>
  </form>

  <!-- annotations -->
  <div class="note" style="left:451px;top:287px;width:133px;height:25px"></div>
  <div class="note" style="left:40px;top:836px;width:212px;height:24px"></div>
  <svg class="arrow" width="760" height="860" aria-hidden="true"><path d="M722 235L188 830" stroke="#7b0a26" stroke-width="2"/><path d="M180 839l4-16 12 11z" fill="#8a0018"/></svg>
  <div class="pin" style="left:440px;top:274px">1</div>
  <div class="pin" style="left:739px;top:206px">2</div>
</div>
<script src="https://cdn.jsdelivr.net/npm/bootstrap@5.3.0/dist/js/bootstrap.bundle.min.js"></script>
</body>
</html>
